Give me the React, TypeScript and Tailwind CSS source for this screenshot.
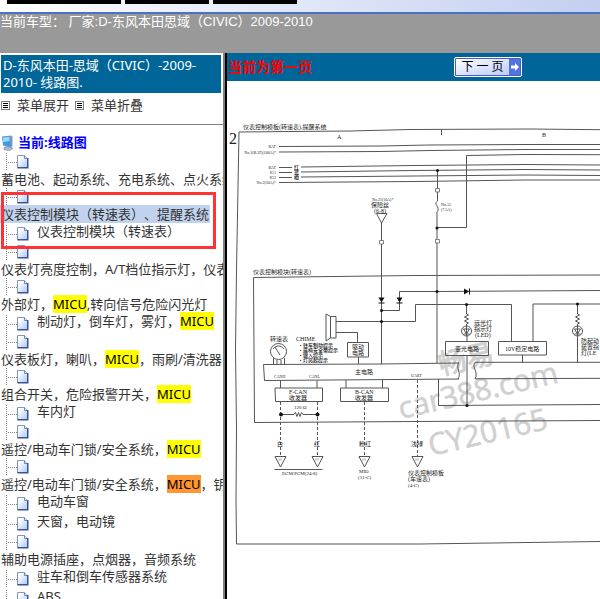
import type { ReactNode } from "react";

type TreeNode = {
  label: ReactNode;
  wrap?: boolean;
  selected?: boolean;
};

function Mark({ active }: { active?: boolean }) {
  return (
    <mark className={active ? "bg-[#ff9632] text-black" : "bg-[#ffff00] text-black"}>MICU</mark>
  );
}

const beforeFrame: TreeNode[] = [{ label: "蓄电池、起动系统、充电系统、点火系统", wrap: true }];

const framed: TreeNode[] = [
  { label: "仪表控制模块（转速表）、提醒系统", wrap: true, selected: true },
  { label: "仪表控制模块（转速表）" },
];

const afterFrame: TreeNode[] = [
  { label: "仪表灯亮度控制，A/T档位指示灯，仪表", wrap: true },
  { label: <>外部灯，<Mark />,转向信号危险闪光灯</>, wrap: true },
  { label: <>制动灯，倒车灯，雾灯，<Mark /></> },
  { label: <>仪表板灯，喇叭，<Mark />，雨刷/清洗器</>, wrap: true },
  { label: <>组合开关，危险报警开关，<Mark /></>, wrap: true },
  { label: "车内灯" },
  { label: <>遥控/电动车门锁/安全系统，<Mark /></>, wrap: true },
  { label: <>遥控/电动车门锁/安全系统，<Mark active />，钥</>, wrap: true },
  { label: "电动车窗" },
  { label: "天窗，电动镜" },
  { label: "辅助电源插座，点烟器，音频系统", wrap: true },
  { label: "驻车和倒车传感器系统" },
  { label: "ABS" },
];

function Branch() {
  return (
    <svg className="w-[29px] h-[18px] shrink-0" viewBox="0 0 29 18" aria-hidden="true">
      <defs>
        <linearGradient id="page" x1="0" y1="0" x2="1" y2="1">
          <stop offset="0.200" stopColor="#ffffff" />
          <stop offset="1" stopColor="#a9c8f4" />
        </linearGradient>
      </defs>
      <path d="M6.500 0V18M8 9.500H17" stroke="#808080" strokeDasharray="1 1" fill="none" />
      <path d="M17.500 2.500H24.500L27.500 5.500V14.500H17.500Z" fill="url(#page)" stroke="#8496bd" />
      <path d="M24.500 2.500V5.500H27.500" fill="#dfeafa" stroke="#6f86b8" />
      <path d="M27.750 5V14.750H17.500" fill="none" stroke="#3d5290" strokeWidth="1.500" />
    </svg>
  );
}

function Node({ node }: { node: TreeNode }) {
  if (node.wrap) {
    return (
      <li>
        <Branch />
        <a href="#" className="block h-[17px] leading-[17px]">
          <span className={node.selected ? "bg-[#c1d2ee] px-px" : "px-px"}>{node.label}</span>
        </a>
      </li>
    );
  }
  return (
    <li className="flex items-end h-5">
      <Branch />
      <a href="#" className="self-start ml-2 leading-[17px]">{node.label}</a>
    </li>
  );
}

function Nodes({ nodes }: { nodes: TreeNode[] }) {
  return (
    <ul>
      {nodes.map((n, i) => (
        <Node key={i} node={n} />
      ))}
    </ul>
  );
}

function MenuIcon() {
  return (
    <svg className="w-[9px] h-[9px]" viewBox="0 0 9 9" shapeRendering="crispEdges" aria-hidden="true">
      <rect x="0.5" y="0.5" width="8" height="8" fill="#fff" stroke="#808080" />
      <path d="M2 2.500H7M2 4.500H7M2 6.500H7" stroke="#000" />
    </svg>
  );
}

function ComputerIcon() {
  return (
    <svg className="w-4 h-4" viewBox="0 0 16 16" aria-hidden="true">
      <path d="M4 12.500L9 11L13 13.500L9 15.800L4 14.500Z" fill="#b5bccd" stroke="#7883a0" strokeWidth="0.600" />
      <path d="M2 1.500L11 0.500L12.500 1.500V11L10.500 13L3 10.500Z" fill="#7f97c4" />
      <path d="M2.500 2L10 1.500L10.500 11.500L3.500 9.500Z" fill="#2f9de8" />
      <path d="M3 2.500L9.500 2L9.500 6L3.200 7Z" fill="#9bdcfa" />
    </svg>
  );
}

function Sidebar() {
  return (
    <aside className="w-[223px] shrink-0 overflow-hidden whitespace-nowrap text-[13px] text-[#333]">
      <h1 className="mt-0.5 ml-px mr-0.5 px-0.5 py-0.5 bg-[#006699] text-white leading-[17px] whitespace-normal">
        D-东风本田-思域（CIVIC）-2009-2010- 线路图.
      </h1>
      <div className="flex items-center h-8 pb-1.5 gap-1.5 border-b border-[#808080]">
        <button type="button" className="flex items-center gap-[7px] pl-px">
          <MenuIcon />
          菜单展开
        </button>
        <button type="button" className="flex items-center gap-[7px]">
          <MenuIcon />
          菜单折叠
        </button>
      </div>
      <h2 className="flex items-center gap-0.5 h-7 pt-2 font-bold text-[#0000ff]">
        <ComputerIcon />
        当前:线路图
      </h2>
      <nav>
        <Nodes nodes={beforeFrame} />
        <div className="relative">
          <Nodes nodes={framed} />
          <div className="absolute left-px top-1 -bottom-1.5 w-[215px] border-[3px] border-[#ff3333] pointer-events-none" />
        </div>
        <Nodes nodes={afterFrame} />
      </nav>
    </aside>
  );
}

function Led({ x, y }: { x: number; y: number }) {
  return (
    <g>
      <path d={`M${x} ${y - 27}V${y - 17}l2 1l-4 2l4 2l-4 2l4 2l-2 1V${y - 5}`} />
      <circle cx={x} cy={y} r="5" fill="#fff" />
      <path d={`M${x - 3} ${y - 2}h6l-3 5zM${x - 3} ${y + 3}h6M${x} ${y - 5}v10`} />
    </g>
  );
}

function Terminal({ x, y }: { x: number; y: number }) {
  return (
    <g>
      <path d={`M${x - 5} ${y}h11l-5.500 10.500z`} fill="#fff" />
      <path d={`M${x - 1} ${y + 2}v2M${x + 1} ${y + 2}v2`} strokeWidth="0.600" />
    </g>
  );
}

function WiringDiagram() {
  return (
    <svg
      className="block w-[373px] h-[518px] max-w-none"
      viewBox="227 81 373 518"
      role="img"
      aria-label="线路图"
    >
      {/* watermark */}
      <g
        fill="#d0d0d0"
        stroke="#d0d0d0"
        strokeWidth="0.600"
        fontFamily="'Open Sans','Noto Sans CJK SC',sans-serif"
        fontSize="30"
      >
        <text transform="translate(441 375) rotate(-13)" fontSize="28" fontWeight="500">畅易</text>
        <text transform="translate(401 419) rotate(-13)">car388.com</text>
        <text transform="translate(431 456) rotate(-13)">CY20165</text>
      </g>

      <g fill="none" stroke="#555" strokeWidth="1">
        {/* sheet border */}
        <path d="M600 129.700L530 129L410 129.500L350 131L239 132L236.500 270L235.500 350L236.500 430L236 500L236.500 544L420 544L600 541.500" />
        <path d="M441.500 130V135" />
        {/* supply lines */}
        <path d="M279 146.500L380 146L430 145L525 144.500H600" />
        <path d="M279 152L380 151.500L430 150.500L525 149.500H600" />
        <path d="M279 167.500H292M301 167L415 165.500L525 164.500L600 165" />
        <path d="M279 172.500H292M301 172L415 170.500L525 169.500L600 170" />
        <path d="M279 177.500H292M301 177L415 176L525 175L600 175.500" />
        <path d="M279 182.500L415 181.500L525 180H600" />
        <path d="M600 154.700L525 154.500L466.500 155.500V227.500H437" />
        {/* fuse column */}
        <path d="M437.500 170.500V201c-3 2 -1 4 0 6s1 4 -1 6M437 213V363" />
        <path d="M435.500 188.500h4v3.500h-4zM435.500 239.500h4v3.500h-4z" fill="#fff" strokeWidth="0.700" />
        {/* feed column */}
        <path d="M376.500 213.500H387L381.500 223ZM381.500 223V364" />
        <path d="M379.500 240.500h4v3.500h-4z" fill="#fff" strokeWidth="0.700" />
        {/* gauge module border */}
        <path d="M600 275L415 275.500L253.500 277.500L254.500 422.500L415 421.500L600 420.500" />
        <path d="M600 290.500L437 291.500H399.500V310.500H381.500" />
        <path d="M336 321.500H415.500V304.500H511.500V342" />
        <path d="M600 304H533V342" />
        {/* speaker */}
        <path d="M326 314L330.500 316.500V338L326 341Z" />
        <path d="M330.500 316.500H336V338H330.500M336 332.500H357.500V342.500M358.500 357V364" />
        <path d="M347.500 342.500H368.500V357H347.500Z" />
        {/* tachometer */}
        <circle cx="278.500" cy="351.500" r="8" />
        <path d="M275 347L280 355M273 349c3 -4 8 -4 11 0M273.500 358V365M277 360V365M281 360V365M284.500 358V365" />
        {/* main circuit */}
        <path d="M459 363L380 364L263.500 364.500L264.500 380.500L459 379M459 363c-4 4 3 10 -1 16" />
        <path d="M600 362.300H475c-4 4 4 10 0 16.500L600 378.300" />
        <path d="M280.500 380.500V388M317 380.500V388M346 380V388M382.500 380V388" />
        <path d="M275 388H322.500V401.500H275.500ZM340.500 388H388.500V401.500H340.500Z" />
        <path d="M445.500 341.500H488.500V355.500H445.500ZM498.500 341.500H546.500V355H498.500Z" />
        <path d="M467 336V341.500M467 355.500V405.500M522.500 355V362.500M577.500 335V362.500" />
        <path d="M438.500 379V405.500L600 404.500" />
        <Led x={466.5} y={331} />
        <Led x={577.5} y={331} />
        {/* CAN lines */}
        <path d="M280.500 402V457M317.500 402V457M364.500 402V457M417.500 380V457" strokeDasharray="3 2" />
        <path d="M281 414.500H294l1.500 -2l1.500 4l1.500 -4l1.500 4l1.500 -4l1.500 2H317" />
        <Terminal x={280} y={456.5} />
        <Terminal x={317} y={456.5} />
        <Terminal x={364} y={456.5} />
        <Terminal x={417} y={456.5} />
        <path d="M274.500 469.500H322.500" />
      </g>

      <g fill="#111">
        <path d="M378.500 297.500h6l-3 5zM396.500 297.500h6l-3 5zM464 288.500v6l5 -3z" />
        <path d="M378.500 302.500h6v1h-6zM396.500 302.500h6v1h-6zM469 288.500h1v6h-1z" />
        <circle cx="437.500" cy="170.500" r="1.500" />
        <circle cx="437" cy="228" r="1.500" />
        <circle cx="381.500" cy="310.500" r="1.500" />
        <circle cx="381.500" cy="321.500" r="1.500" />
        <circle cx="437" cy="291.500" r="1.500" />
        <circle cx="466.500" cy="304.500" r="1.500" />
        <circle cx="577.500" cy="304" r="1.500" />
        <circle cx="467" cy="405.500" r="1.500" />
        <circle cx="281" cy="414.500" r="2" />
        <circle cx="317.500" cy="414.500" r="2" />
      </g>

      <g fill="#222" fontFamily="'Liberation Serif','Noto Sans CJK SC',serif" fontSize="6">
        <text x="229" y="144" fontSize="16">2</text>
        <text x="243" y="129">仪表控制模板(转速表),提醒系统</text>
        <text x="337" y="139">A</text>
        <text x="542" y="137">B</text>
        <text x="253" y="274">仪表控制模块(转速表)</text>
        <text x="371" y="207">保险丝</text>
        <text x="374" y="213">(6-8)</text>
        <text x="270" y="341">转速表</text>
        <text x="296" y="341">CHIME</text>
        <text x="352" y="349">驱动</text>
        <text x="352" y="355">电路</text>
        <text x="355" y="374">主电路</text>
        <text x="474" y="325">远光灯</text>
        <text x="474" y="331">指示灯</text>
        <text x="475" y="337">(LED)</text>
        <text x="455" y="351">变光电路</text>
        <text x="505" y="351">10V稳定电路</text>
        <text x="581" y="343">防起动</text>
        <text x="581" y="349">装置指</text>
        <text x="581" y="355">灯(LE</text>
        <text x="289" y="394">F-CAN</text>
        <text x="289" y="400">收发器</text>
        <text x="355" y="394">B-CAN</text>
        <text x="355" y="400">收发器</text>
        <text x="277" y="446">白</text>
        <text x="314" y="446">红</text>
        <text x="359" y="446">粉红</text>
        <text x="411" y="446">浅绿</text>
        <text x="408" y="475">仪表控制模板</text>
        <text x="408" y="481">(车速表)</text>
      </g>
      <g fill="#111" fontFamily="'Liberation Serif','Noto Sans CJK SC',serif" fontSize="5" fontWeight="500">
        <text x="294" y="169">红</text>
        <text x="294" y="174">蓝</text>
        <text x="294" y="179">橙</text>
        <text x="298" y="347">・驻车制动提示</text>
        <text x="298" y="352">・座椅安全带提示</text>
        <text x="298" y="357">・键入提示</text>
        <text x="298" y="362">・灯亮起提示</text>
      </g>
      <g fill="#222" fontFamily="'Liberation Serif',serif" fontSize="4">
        <text x="276" y="148" textAnchor="end">BAT</text>
        <text x="276" y="154" textAnchor="end">No.1(BAT)(100A)*</text>
        <text x="276" y="169" textAnchor="end">BAT</text>
        <text x="276" y="174" textAnchor="end">IG1</text>
        <text x="276" y="179" textAnchor="end">IG2</text>
        <text x="276" y="184" textAnchor="end">No.2(50A)*</text>
        <text x="372" y="201">No.21(10A)*</text>
        <text x="441" y="206">No.15</text>
        <text x="441" y="211">(7.5A)</text>
        <text x="274" y="378">CANH</text>
        <text x="309" y="378">CANL</text>
        <text x="411" y="377">UART</text>
      </g>
      <g fill="#222" fontFamily="'Liberation Serif',serif" fontSize="5">
        <text x="294" y="409">120 Ω</text>
        <text x="282" y="475">ECM/PCM(24-8)</text>
        <text x="359" y="473">MID</text>
        <text x="358" y="479">(11-C)</text>
        <text x="408" y="487">(4-C)</text>
      </g>
    </svg>
  );
}

function NextButton() {
  return (
    <button
      type="button"
      className="flex items-stretch w-[68px] h-5 rounded-xs border border-white bg-[#4a5cc0] p-px text-xs leading-4 text-black"
    >
      <span className="flex-1 bg-linear-to-br from-white to-[#bccbfa]">下 一 页</span>
      <span className="flex items-center justify-center w-[11px] bg-[#5273e0]">
        <svg className="w-2 h-2" viewBox="0 0 8 8" fill="#fff" aria-hidden="true">
          <path d="M0 2.500H4V0L8 4L4 8V5.500H0Z" />
        </svg>
      </span>
    </button>
  );
}

export default function App() {
  return (
    <div
      lang="zh-CN"
      className="flex flex-col h-screen overflow-hidden bg-white font-['Noto_Sans','Noto_Sans_CJK_SC',sans-serif] [text-spacing-trim:space-all]"
    >
      {/* Top tabs */}
      <div className="flex gap-1 h-3.5 shrink-0 pl-[7px] bg-linear-to-r from-white to-[#c3cff0] border-b-2 border-[#4a70c8]">
        <div className="w-[114px] h-1 bg-black" />
        <div className="w-[84px] h-1 bg-black" />
        <div className="w-[84px] h-1 bg-black" />
      </div>

      <header className="h-[39px] shrink-0 bg-[#999999] text-white text-[13px] leading-4 whitespace-pre font-['Liberation_Sans','Noto_Sans_CJK_SC',sans-serif]">
        当前车型： 厂家:D-东风本田思域（CIVIC）2009-2010
      </header>

      <div className="flex flex-1 min-h-0">
        <Sidebar />
        <div className="w-1 shrink-0 bg-[#808080] border-r-2 border-black" />
        <main className="flex-1 min-w-0 overflow-hidden">
          <div className="grid grid-cols-[1fr_68px_78px] items-center h-7 bg-[#006699]">
            <strong className="pl-px text-sm leading-4 text-[#ff0000]">当前为第一页</strong>
            <NextButton />
          </div>
          <WiringDiagram />
        </main>
      </div>
    </div>
  );
}
